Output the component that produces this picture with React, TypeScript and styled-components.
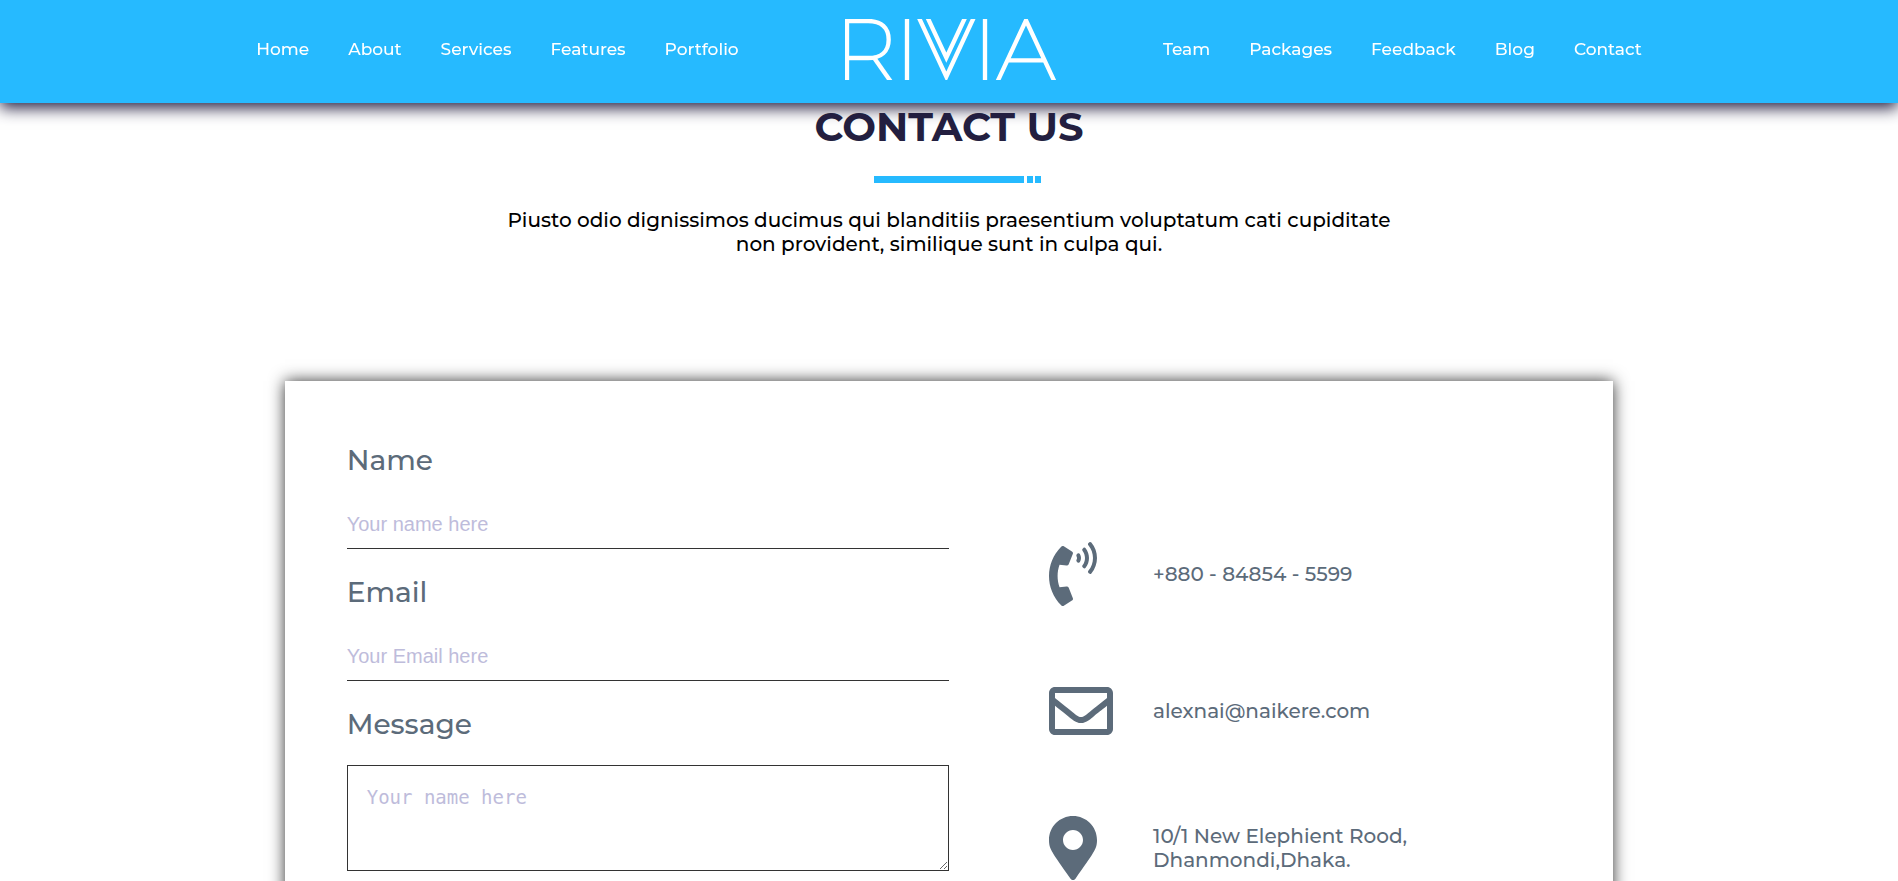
import React from "react";
import styled, { createGlobalStyle } from "styled-components";
import { FaMapMarkerAlt, FaPhoneVolume, FaRegEnvelope } from "react-icons/fa";

const GlobalStyle = createGlobalStyle`
  *, *::before, *::after { box-sizing: border-box; }
  body {
    margin: 0;
    background: #fff;
    color: #000;
    font-family: Montserrat, Inter, "Open Sans", sans-serif;
    font-weight: 500;
  }
`;

const Page = styled.div`
  height: 100vh;
  overflow-y: auto;
  scrollbar-width: none;
`;

const Header = styled.header`
  position: sticky;
  top: 0;
  z-index: 1;
  height: 103px;
  background: #26baff;
  box-shadow: 0 5px 15px #231f40;
`;

const Nav = styled.nav`
  width: 73%;
  height: 100%;
  margin: 0 auto;
  padding-bottom: 5px;
  display: flex;
  align-items: center;
  justify-content: space-between;
`;

const NavList = styled.ul`
  margin: 0;
  padding: 0;
  display: flex;
  gap: 39px;
  list-style: none;
`;

const NavLink = styled.a`
  color: #fff;
  font-size: 17px;
  line-height: 24px;
  text-decoration: none;
`;

const Logo = styled.svg`
  display: block;
  width: 211px;
  height: 61px;
  fill: none;
  stroke: #fff;
  stroke-width: 13;
`;

const Intro = styled.section`
  display: flex;
  flex-direction: column;
  align-items: center;
  text-align: center;
`;

const Title = styled.h1`
  margin: 0;
  color: #231f40;
  font-size: 40px;
  line-height: 48px;
  font-weight: 700;
`;

const Divider = styled.div`
  margin: 25px 0;
  padding-left: 17px;
  display: flex;
`;

const Dash = styled.span<{ $width: number; $gap?: number }>`
  width: ${(p) => p.$width}px;
  height: 7px;
  margin-right: ${(p) => p.$gap ?? 0}px;
  background: #26baff;
`;

const Lead = styled.p`
  max-width: 900px;
  margin: 0;
  font-size: 20px;
  line-height: 24px;
`;

const Card = styled.section`
  width: 70%;
  margin: 125px auto 100px;
  padding: 62px;
  display: grid;
  grid-template-columns: 1fr 1fr;
  background: #fff;
  box-shadow: 0 0 15px #333;
`;

const Form = styled.form`
  display: flex;
  flex-direction: column;
  gap: 26px;
`;

const Field = styled.div`
  display: flex;
  flex-direction: column;
  gap: 24px;
`;

const Label = styled.label`
  color: #5c6b7a;
  font-size: 28px;
  line-height: 34px;
`;

const TextInput = styled.input`
  width: 100%;
  height: 48px;
  padding: 0;
  border: 0;
  border-bottom: 1px solid #333;
  outline: 0;
  background: transparent;
  font-family: "Liberation Sans", Arial, sans-serif;
  font-size: 20px;
  &::placeholder { color: #bebcdb; }
`;

const MessageInput = styled.textarea`
  display: block;
  width: 100%;
  height: 106px;
  padding: 19px;
  border: 1px solid #333;
  outline: 0;
  background: transparent;
  font-family: Consolas, "DejaVu Sans Mono", monospace;
  font-size: 19px;
  line-height: 24px;
  &::placeholder { color: #bebcdb; }
`;

const ContactList = styled.address`
  padding: 99px 0 0 100px;
  display: flex;
  flex-direction: column;
  gap: 73px;
  color: #5c6b7a;
  font-style: normal;
`;

const ContactRow = styled.div`
  display: flex;
  align-items: center;
  gap: 40px;
  font-size: 20px;
  line-height: 24px;
`;

const ContactText = styled.span`
  max-width: 270px;
`;

const leftLinks = ["Home", "About", "Services", "Features", "Portfolio"];
const rightLinks = ["Team", "Packages", "Feedback", "Blog", "Contact"];

const contacts = [
  { Icon: FaPhoneVolume, text: "+880 - 84854 - 5599" },
  { Icon: FaRegEnvelope, text: "alexnai@naikere.com" },
  { Icon: FaMapMarkerAlt, text: "10/1 New Elephient Rood, Dhanmondi,Dhaka." },
];

function NavLinks({ items }: { items: string[] }) {
  return (
    <NavList>
      {items.map((item) => (
        <li key={item}>
          <NavLink href={`#${item.toLowerCase()}`}>{item}</NavLink>
        </li>
      ))}
    </NavList>
  );
}

function RiviaLogo() {
  return (
    <Logo viewBox="195 57 633 183" role="img" aria-label="Rivia">
      <path d="M201 240V63H264C304 63 326 84 326 119C326 153 304 174 264 174H201" />
      <path d="M280 170L336 250" />
      <path d="M381 57V240" />
      <path d="M414 47L499 230L584 47" />
      <path d="M440 47L499 173L558 47" />
      <path d="M615 57V240" />
      <path d="M650 250L738 61L826 250M683 181H793" />
    </Logo>
  );
}

export default function App() {
  return (
    <Page>
      <GlobalStyle />
      <Header>
        <Nav>
          <NavLinks items={leftLinks} />
          <RiviaLogo />
          <NavLinks items={rightLinks} />
        </Nav>
      </Header>
      <main id="contact">
        <Intro>
          <Title>CONTACT US</Title>
          <Divider>
            <Dash $width={150} $gap={3} />
            <Dash $width={6} $gap={2} />
            <Dash $width={6} />
          </Divider>
          <Lead>
            Piusto odio dignissimos ducimus qui blanditiis praesentium voluptatum cati cupiditate
            non provident, similique sunt in culpa qui.
          </Lead>
        </Intro>
        <Card>
          <Form>
            <Field>
              <Label htmlFor="name">Name</Label>
              <TextInput id="name" type="text" placeholder="Your name here" />
            </Field>
            <Field>
              <Label htmlFor="email">Email</Label>
              <TextInput id="email" type="email" placeholder="Your Email here" />
            </Field>
            <Field>
              <Label htmlFor="message">Message</Label>
              <MessageInput id="message" placeholder="Your name here" />
            </Field>
          </Form>
          <ContactList>
            {contacts.map(({ Icon, text }) => (
              <ContactRow key={text}>
                <Icon size={64} preserveAspectRatio="xMinYMid" aria-hidden />
                <ContactText>{text}</ContactText>
              </ContactRow>
            ))}
          </ContactList>
        </Card>
      </main>
    </Page>
  );
}
